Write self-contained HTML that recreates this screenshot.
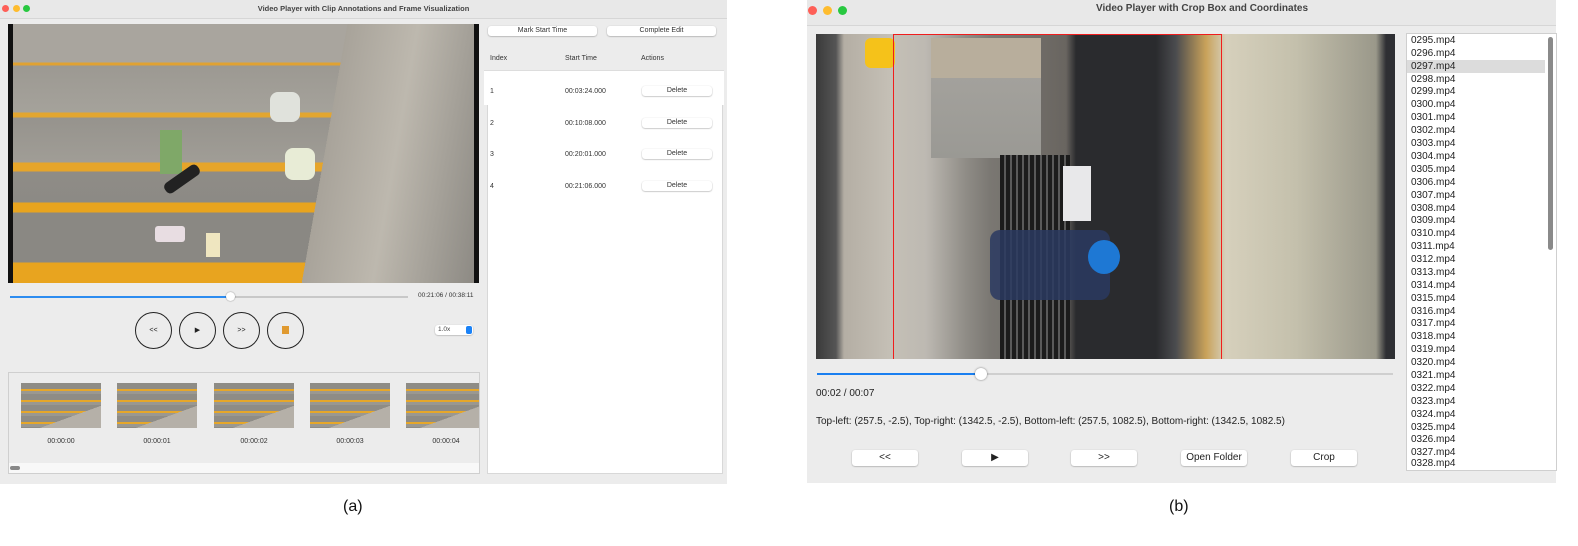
<!DOCTYPE html>
<html><head><meta charset="utf-8"><style>
*{margin:0;padding:0;box-sizing:border-box}
body{width:1578px;height:546px;background:#fff;position:relative;overflow:hidden;font-family:"Liberation Sans",sans-serif;color:#222}
.a{position:absolute}
.win{background:#ececec}
.tb{background:#e8e8e8;border-bottom:1px solid #d6d6d6}
.dot{position:absolute;width:7px;height:7px;border-radius:50%}
.btn{position:absolute;background:#fff;border-radius:3px;box-shadow:0 0.5px 1.5px rgba(0,0,0,.35);font-size:7px;text-align:center;line-height:10px;color:#333}
.t7{font-size:7px;color:#333}
.circ{position:absolute;width:37px;height:37px;border:1.3px solid #222;border-radius:50%;font-size:7px;text-align:center;line-height:35px}
.thumb{position:absolute;top:383px;width:80px;height:45px;background:
linear-gradient(160deg,transparent 70%,#b5b0a8 70%),
repeating-linear-gradient(180deg,#8e8c86 0 6px,#e6a72a 6px 8px,#9a9891 8px 11px);}
.tl{position:absolute;top:438px;font-size:7px;color:#333;width:80px;text-align:center}
.li{position:absolute;left:1411px;font-size:10px;color:#222;height:12.9px;line-height:12.9px}
.b2{position:absolute;top:450px;height:16px;background:#fff;border-radius:3px;box-shadow:0 0.5px 1.5px rgba(0,0,0,.35);font-size:10px;text-align:center;line-height:16px;color:#222}
</style></head><body>
<!-- window a -->
<div class="a win" style="left:0;top:0;width:727px;height:484px"></div>
<div class="a tb" style="left:0;top:0;width:727px;height:19px"></div>
<div class="dot" style="left:2px;top:5px;background:#fe5f57"></div>
<div class="dot" style="left:13px;top:5px;background:#febc2e"></div>
<div class="dot" style="left:23px;top:5px;background:#28c840"></div>
<div class="a" style="left:0;width:727px;top:4px;text-align:center;font-size:7.5px;font-weight:bold;color:#444">Video Player with Clip Annotations and Frame Visualization</div>
<div class="a" style="left:8px;top:24px;width:471px;height:259px;background:#111"></div>
<div class="a" style="left:13px;top:24px;width:461px;height:259px;background:
linear-gradient(100deg,transparent 66%,#a8a39a 66%,#bdb8ae 80%,#8d8a84 100%),
linear-gradient(180deg,#a9a59e 0,#a9a59e 38px,#e0a232 39px,#e0a232 41px,#9c9992 42px,#a5a29b 88px,#e3a630 89px,#e3a630 93px,#96938d 94px,#a09d96 138px,#e6a52a 139px,#e6a52a 147px,#8f8c86 148px,#8c8a85 178px,#e8a41f 179px,#e8a41f 188px,#8a8883 189px,#8a8883 238px,#e8a41f 239px)"></div>
<div class="a" style="left:160px;top:130px;width:22px;height:44px;background:#7fa868"></div>
<div class="a" style="left:162px;top:173px;width:40px;height:12px;background:#222;transform:rotate(-35deg);border-radius:5px"></div>
<div class="a" style="left:285px;top:148px;width:30px;height:32px;background:#e8ecd6;border-radius:8px"></div>
<div class="a" style="left:270px;top:92px;width:30px;height:30px;background:#e0e2dc;border-radius:8px"></div>
<div class="a" style="left:155px;top:226px;width:30px;height:16px;background:#e8dde2;border-radius:3px"></div>
<div class="a" style="left:206px;top:233px;width:14px;height:24px;background:#efe6c0"></div>
<div class="a" style="left:10px;top:296px;width:220px;height:2px;background:#2d8cf0"></div>
<div class="a" style="left:230px;top:296px;width:178px;height:2px;background:#c8c8c8"></div>
<div class="a" style="left:226px;top:292px;width:9px;height:9px;border-radius:50%;background:#fff;box-shadow:0 0 1.5px rgba(0,0,0,.5)"></div>
<div class="a t7" style="left:418px;top:292px;font-size:6.5px">00:21:06 / 00:38:11</div>
<div class="circ" style="left:135px;top:312px">&lt;&lt;</div>
<div class="circ" style="left:179px;top:312px">&#9654;</div>
<div class="circ" style="left:223px;top:312px">&gt;&gt;</div>
<div class="circ" style="left:267px;top:312px"><span style="display:inline-block;width:7px;height:8px;background:#e09a30;vertical-align:middle"></span></div>
<div class="a" style="left:435px;top:325px;width:38px;height:10px;background:#fff;border-radius:3px;box-shadow:0 0.5px 1.5px rgba(0,0,0,.3);font-size:6.5px;line-height:10px;padding-left:3px;color:#444">1.0x</div>
<div class="a" style="left:466px;top:326px;width:6px;height:8px;background:#1a82f7;border-radius:2px"></div>
<div class="a" style="left:8px;top:372px;width:472px;height:102px;border:1px solid #cfcfcf;background:#ececec"></div>
<div class="a" style="left:9px;top:463px;width:470px;height:10px;background:#f8f8f8"></div>
<div class="a" style="left:10px;top:466px;width:10px;height:4px;background:#888;border-radius:2px"></div>
<div class="thumb" style="left:21px"></div><div class="thumb" style="left:117px"></div><div class="thumb" style="left:214px"></div><div class="thumb" style="left:310px"></div><div class="thumb" style="left:406px;width:73px"></div>
<div class="tl" style="left:21px">00:00:00</div><div class="tl" style="left:117px">00:00:01</div><div class="tl" style="left:214px">00:00:02</div><div class="tl" style="left:310px">00:00:03</div><div class="tl" style="left:406px">00:00:04</div>
<div class="btn" style="left:488px;top:26px;width:109px">Mark Start Time</div>
<div class="btn" style="left:607px;top:26px;width:109px">Complete Edit</div>
<div class="a t7" style="left:490px;top:55px">Index</div>
<div class="a t7" style="left:565px;top:55px">Start Time</div>
<div class="a t7" style="left:641px;top:55px">Actions</div>
<div class="a" style="left:487px;top:104px;width:236px;height:370px;background:#fff;border:1px solid #d8d8d8"></div>
<div class="a" style="left:484px;top:70px;width:240px;height:35px;background:#fff;border-top:1px solid #ddd"></div>
<div class="a t7" style="left:490px;top:88px">1</div><div class="a t7" style="left:565px;top:88px">00:03:24.000</div><div class="btn" style="left:642px;top:86px;width:70px">Delete</div>
<div class="a t7" style="left:490px;top:120px">2</div><div class="a t7" style="left:565px;top:120px">00:10:08.000</div><div class="btn" style="left:642px;top:118px;width:70px">Delete</div>
<div class="a t7" style="left:490px;top:151px">3</div><div class="a t7" style="left:565px;top:151px">00:20:01.000</div><div class="btn" style="left:642px;top:149px;width:70px">Delete</div>
<div class="a t7" style="left:490px;top:183px">4</div><div class="a t7" style="left:565px;top:183px">00:21:06.000</div><div class="btn" style="left:642px;top:181px;width:70px">Delete</div>
<div class="a" style="left:343px;top:498px;font-size:16px;color:#111">(a)</div>

<!-- window b -->
<div class="a win" style="left:807px;top:0;width:749px;height:483px"></div>
<div class="a" style="left:807px;top:0;width:749px;height:26px;background:#e8e8e8;border-bottom:1px solid #d6d6d6"></div>
<div class="dot" style="left:808px;top:6px;width:9px;height:9px;background:#fe5f57"></div>
<div class="dot" style="left:823px;top:6px;width:9px;height:9px;background:#febc2e"></div>
<div class="dot" style="left:838px;top:6px;width:9px;height:9px;background:#28c840"></div>
<div class="a" style="left:807px;width:790px;top:3px;text-align:center;font-size:10px;font-weight:bold;color:#444">Video Player with Crop Box and Coordinates</div>
<div class="a" style="left:816px;top:34px;width:579px;height:325px;background:
linear-gradient(90deg,#3a3a3a 0,#555 20px,#b4aea4 28px,#c5c0b6 75px,#bdb9b2 110px,#8f8c86 150px,#7a7772 175px,#696560 250px,#2a2b2e 260px,#2a2b2e 340px,#4b4c4f 360px,#c9a25a 390px,#d6d0bc 410px,#c4c0ac 480px,#9a988a 560px,#2e2f33 570px)"></div>
<div class="a" style="left:931px;top:38px;width:110px;height:120px;background:linear-gradient(180deg,#b8ae9c 0,#b8ae9c 40px,#a3a19c 40px,#9a9994 120px)"></div>
<div class="a" style="left:1000px;top:155px;width:70px;height:204px;background:repeating-linear-gradient(90deg,#1c1c1c 0 4px,#5a5a5a 4px 6px)"></div>
<div class="a" style="left:990px;top:230px;width:120px;height:70px;background:#2a3a60;border-radius:10px;opacity:.85"></div>
<div class="a" style="left:1088px;top:240px;width:32px;height:34px;background:#1e78d4;border-radius:50%"></div>
<div class="a" style="left:1063px;top:166px;width:28px;height:55px;background:#e8e8ea"></div>
<div class="a" style="left:865px;top:38px;width:30px;height:30px;background:#f5c21a;border-radius:6px"></div>
<div class="a" style="left:893px;top:34px;width:329px;height:325px;border:1.5px solid #f01d1d;border-bottom:none"></div>
<div class="a" style="left:817px;top:373px;width:164px;height:2px;background:#1a7ff0"></div>
<div class="a" style="left:981px;top:373px;width:412px;height:2px;background:#cfcfcf"></div>
<div class="a" style="left:975px;top:368px;width:12px;height:12px;border-radius:50%;background:#fff;box-shadow:0 0 2px rgba(0,0,0,.5)"></div>
<div class="a" style="left:816px;top:388px;font-size:10px;color:#222">00:02 / 00:07</div>
<div class="a" style="left:816px;top:416px;font-size:10px;color:#222">Top-left: (257.5, -2.5), Top-right: (1342.5, -2.5), Bottom-left: (257.5, 1082.5), Bottom-right: (1342.5, 1082.5)</div>
<div class="b2" style="left:852px;width:66px">&lt;&lt;</div>
<div class="b2" style="left:962px;width:66px">&#9654;</div>
<div class="b2" style="left:1071px;width:66px">&gt;&gt;</div>
<div class="b2" style="left:1181px;width:66px">Open Folder</div>
<div class="b2" style="left:1291px;width:66px">Crop</div>
<div class="a" style="left:1406px;top:33px;width:151px;height:438px;background:#fff;border:1px solid #cfcfcf"></div>
<div class="a" style="left:1407px;top:60px;width:138px;height:13px;background:#dcdcdc"></div>
<div class="a" style="left:1548px;top:37px;width:5px;height:213px;background:#8a8a8a;border-radius:3px"></div>
<div style="position:absolute;left:0;top:2px;width:1578px;height:0">
<div class="li" style="top:33px">0295.mp4</div><div class="li" style="top:46px">0296.mp4</div><div class="li" style="top:59px">0297.mp4</div><div class="li" style="top:72px">0298.mp4</div><div class="li" style="top:84px">0299.mp4</div><div class="li" style="top:97px">0300.mp4</div><div class="li" style="top:110px">0301.mp4</div><div class="li" style="top:123px">0302.mp4</div><div class="li" style="top:136px">0303.mp4</div><div class="li" style="top:149px">0304.mp4</div><div class="li" style="top:162px">0305.mp4</div><div class="li" style="top:175px">0306.mp4</div><div class="li" style="top:188px">0307.mp4</div><div class="li" style="top:201px">0308.mp4</div><div class="li" style="top:213px">0309.mp4</div><div class="li" style="top:226px">0310.mp4</div><div class="li" style="top:239px">0311.mp4</div><div class="li" style="top:252px">0312.mp4</div><div class="li" style="top:265px">0313.mp4</div><div class="li" style="top:278px">0314.mp4</div><div class="li" style="top:291px">0315.mp4</div><div class="li" style="top:304px">0316.mp4</div><div class="li" style="top:316px">0317.mp4</div><div class="li" style="top:329px">0318.mp4</div><div class="li" style="top:342px">0319.mp4</div><div class="li" style="top:355px">0320.mp4</div><div class="li" style="top:368px">0321.mp4</div><div class="li" style="top:381px">0322.mp4</div><div class="li" style="top:394px">0323.mp4</div><div class="li" style="top:407px">0324.mp4</div><div class="li" style="top:420px">0325.mp4</div><div class="li" style="top:432px">0326.mp4</div><div class="li" style="top:445px">0327.mp4</div><div class="li" style="top:456px">0328.mp4</div>
</div>
<div class="a" style="left:1169px;top:498px;font-size:16px;color:#111">(b)</div>
</body></html>
